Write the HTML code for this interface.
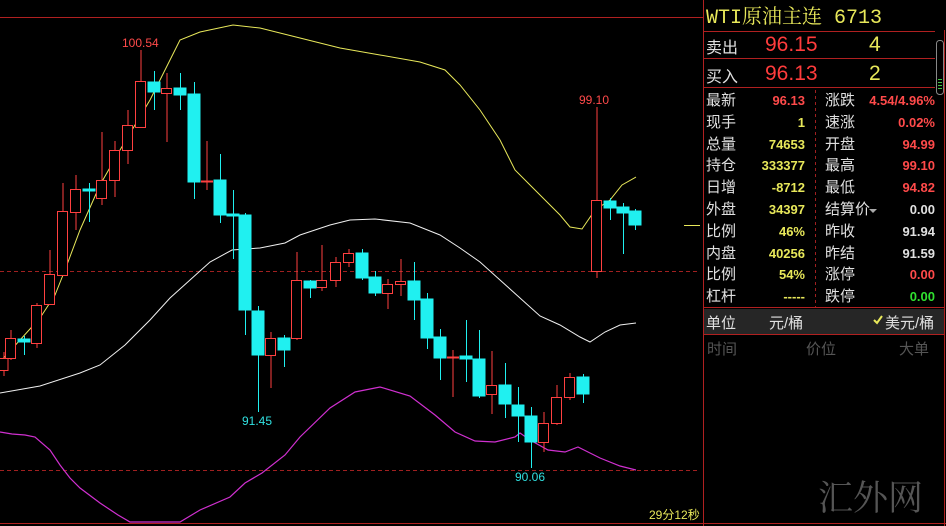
<!DOCTYPE html>
<html><head><meta charset="utf-8"><style>
html,body{margin:0;padding:0;background:#000;width:946px;height:526px;overflow:hidden;font-family:"Liberation Sans","Noto Sans CJK SC",sans-serif}
.p{position:absolute;white-space:nowrap}
.l{color:#e0e0e0;font-size:15px}
.v{font-size:13px;font-weight:bold;text-align:right}
</style></head><body>
<svg class="p" style="left:0;top:0" width="946" height="526">
<line x1="0" y1="17.5" x2="703" y2="17.5" stroke="#b02020"/>
<line x1="0" y1="523.5" x2="946" y2="523.5" stroke="#b02020"/>
<line x1="703.5" y1="0" x2="703.5" y2="526" stroke="#b02020"/>
<line x1="944.5" y1="30" x2="944.5" y2="526" stroke="#b02020"/>
<line x1="0" y1="271.5" x2="700" y2="271.5" stroke="#a02020" stroke-dasharray="4,3"/>
<line x1="0" y1="470.5" x2="700" y2="470.5" stroke="#a02020" stroke-dasharray="4,3"/>
<polyline fill="none" stroke="#e8e85a" stroke-width="1" points="0,362 20,340 40,318 55,295 65,270 80,230 100,185 120,150 150,100 165,70 180,40 200,32 233,25 260,28 300,38 340,48 380,55 420,62 445,70 460,85 480,110 500,140 515,170 530,185 545,200 560,215 570,227 582,229 595,210 610,200 622,185 636,177"/>
<line x1="684" y1="225.5" x2="700" y2="225.5" stroke="#e8e85a"/>
<polyline fill="none" stroke="#f0f0f0" stroke-width="1" points="0,393 40,386 80,373 100,365 125,345 150,320 170,298 190,280 210,262 232,250 260,248 285,243 300,235 330,225 350,220 375,219 410,223 440,235 460,248 480,262 500,280 520,298 540,316 560,325 580,337 590,342 605,332 620,325 636,323"/>
<polyline fill="none" stroke="#d030d0" stroke-width="1.2" points="0,432 12,434 25,435 35,437 50,450 60,465 70,478 80,488 100,503 118,515 130,522 180,522 200,510 230,497 245,483 262,473 285,455 300,437 330,408 355,392 380,387 410,396 435,415 455,432 475,441 495,442 515,437 520,433 530,440 548,450 565,452 578,447 600,458 620,466 636,470"/>
<g stroke="#ff4040" fill="none" stroke-width="1">
<path d="M4,352V376M11,330V360M37,303V348M50,250V305M63,183V276M76,175V230M102,132V205M115,141V197M128,110V164M141,50V127M167,73V142M207,141V190M271,332V388M297,252V340M322,245V291M336,257V287M349,249V267M388,279V309M401,259V296M453,350V397M492,351V414M544,412V452M557,385V425M570,373V400M597,107V278"/>
<rect x="-2" y="358.5" width="10" height="12" fill="#000"/>
<rect x="5.5" y="338.5" width="10" height="20" fill="#000"/>
<rect x="31.5" y="305.5" width="10" height="38" fill="#000"/>
<rect x="44.5" y="274.5" width="10" height="30" fill="#000"/>
<rect x="57.5" y="211.5" width="10" height="64" fill="#000"/>
<rect x="70.5" y="189.5" width="10" height="23" fill="#000"/>
<rect x="96.5" y="180.5" width="10" height="18" fill="#000"/>
<rect x="109.5" y="150.5" width="10" height="30" fill="#000"/>
<rect x="122.5" y="125.5" width="10" height="25" fill="#000"/>
<rect x="135.5" y="81.5" width="10" height="46" fill="#000"/>
<rect x="161.5" y="88.5" width="10" height="5" fill="#000"/>
<line x1="201" y1="181.5" x2="213" y2="181.5" stroke-width="2"/>
<rect x="265.5" y="338.5" width="10" height="17" fill="#000"/>
<rect x="291.5" y="280.5" width="10" height="58" fill="#000"/>
<rect x="316.5" y="280.5" width="10" height="7" fill="#000"/>
<rect x="330.5" y="262.5" width="10" height="18" fill="#000"/>
<rect x="343.5" y="253.5" width="10" height="9" fill="#000"/>
<rect x="382.5" y="284.5" width="10" height="9" fill="#000"/>
<rect x="395.5" y="281.5" width="10" height="3" fill="#000"/>
<line x1="447" y1="357.5" x2="459" y2="357.5" stroke-width="2"/>
<rect x="486.5" y="385.5" width="10" height="9" fill="#000"/>
<rect x="538.5" y="423.5" width="10" height="19" fill="#000"/>
<rect x="551.5" y="397.5" width="10" height="26" fill="#000"/>
<rect x="564.5" y="377.5" width="10" height="20" fill="#000"/>
<rect x="591.5" y="200.5" width="10" height="71" fill="#000"/>
</g>
<g stroke="#20f0f0" fill="#20f0f0" stroke-width="1">
<path d="M24.5,336V355M89.5,183V222M154.5,71V110M180.5,73V110M194.5,82V199M220.5,154V223M233.5,190V259M245.5,213V335M258.5,306V412M284.5,335V367M310.5,280V298M362.5,249V280M375.5,271V296M414.5,262V320M427.5,293V349M440.5,329V380M466.5,320V382M479.5,330V398M505.5,363V418M518.5,387V442M531.5,407V468M583.5,374V403M610.5,198V220M623.5,203V254M635.5,209V230"/>
<rect x="18" y="339" width="12" height="3"/>
<rect x="83" y="189" width="12" height="2"/>
<rect x="148" y="82" width="12" height="10"/>
<rect x="174" y="88" width="12" height="7"/>
<rect x="188" y="94" width="12" height="88"/>
<rect x="214" y="180" width="12" height="35"/>
<rect x="227" y="214" width="12" height="2"/>
<rect x="239" y="215" width="12" height="95"/>
<rect x="252" y="311" width="12" height="44"/>
<rect x="278" y="338" width="12" height="12"/>
<rect x="304" y="281" width="12" height="7"/>
<rect x="356" y="253" width="12" height="25"/>
<rect x="369" y="277" width="12" height="16"/>
<rect x="408" y="281" width="12" height="19"/>
<rect x="421" y="299" width="12" height="39"/>
<rect x="434" y="337" width="12" height="21"/>
<rect x="460" y="356" width="12" height="3"/>
<rect x="473" y="359" width="12" height="37"/>
<rect x="499" y="385" width="12" height="19"/>
<rect x="512" y="405" width="12" height="11"/>
<rect x="525" y="416" width="12" height="26"/>
<rect x="577" y="377" width="12" height="17"/>
<rect x="604" y="201" width="12" height="7"/>
<rect x="617" y="207" width="12" height="6"/>
<rect x="629" y="211" width="12" height="14"/>
</g>
<text x="122" y="47" fill="#ff4a4a" font-size="12" font-family="Liberation Sans">100.54</text>
<text x="579" y="104" fill="#ff4a4a" font-size="12" font-family="Liberation Sans">99.10</text>
<text x="242" y="425" fill="#30e0e0" font-size="12" font-family="Liberation Sans">91.45</text>
<text x="515" y="481" fill="#30e0e0" font-size="12" font-family="Liberation Sans">90.06</text>
<text x="649" y="519" fill="#e8e85a" font-size="12" font-family="Liberation Sans,Noto Sans CJK SC">29分12秒</text>
<text x="818" y="510" fill="#555" font-size="35" font-family="Noto Serif CJK SC,serif">汇外网</text>
<text x="706" y="23" fill="#e8e85a" font-size="20" font-family="Liberation Mono,Noto Serif CJK SC,monospace">WTI原油主连 6713</text>
<line x1="703" y1="31.5" x2="935" y2="31.5" stroke="#b02020"/>
<line x1="703" y1="58.5" x2="935" y2="58.5" stroke="#b02020"/>
<line x1="703" y1="87.5" x2="935" y2="87.5" stroke="#b02020"/>
<rect x="936.5" y="40.5" width="7" height="54" rx="3" fill="none" stroke="#888"/>
<g stroke="#40c040"><line x1="938" y1="79.5" x2="942" y2="79.5"/><line x1="938" y1="82.5" x2="942" y2="82.5"/><line x1="938" y1="85.5" x2="942" y2="85.5"/><line x1="938" y1="88.5" x2="942" y2="88.5"/></g>
<line x1="815.5" y1="90" x2="815.5" y2="307" stroke="#a02020" stroke-dasharray="3,3"/>
<line x1="703" y1="307.5" x2="944" y2="307.5" stroke="#b02020"/>
<rect x="704" y="309" width="240" height="25" fill="#262626"/>
<line x1="703" y1="334.5" x2="944" y2="334.5" stroke="#b02020"/>
<path d="M874,320l3,3l5,-7" stroke="#e8e85a" stroke-width="2" fill="none"/>
<path d="M869,209l8,0l-4,4z" fill="#aaa"/>
</svg>
<div class="p l" style="left:706px;top:34px;font-size:16px">卖出</div>
<div class="p" style="left:765px;top:33px;font-size:21px;color:#ff3c3c">96.15</div>
<div class="p" style="left:869px;top:33px;font-size:21px;color:#e8e85a">4</div>
<div class="p l" style="left:706px;top:63px;font-size:16px">买入</div>
<div class="p" style="left:765px;top:62px;font-size:21px;color:#ff3c3c">96.13</div>
<div class="p" style="left:869px;top:62px;font-size:21px;color:#e8e85a">2</div>

<div class="p l" style="left:706px;top:90px;line-height:21.8px">最新<br>现手<br>总量<br>持仓<br>日增<br>外盘<br>比例<br>内盘<br>比例<br>杠杆</div>
<div class="p v" style="right:141px;top:90px;line-height:21.8px;color:#e8e85a"><span style="color:#ff4a4a">96.13</span><br>1<br>74653<br>333377<br>-8712<br>34397<br>46%<br>40256<br>54%<br>-----</div>
<div class="p l" style="left:825px;top:90px;line-height:21.8px">涨跌<br>速涨<br>开盘<br>最高<br>最低<br>结算价<br>昨收<br>昨结<br>涨停<br>跌停</div>
<div class="p v" style="right:11px;top:90px;line-height:21.8px;color:#e0e0e0"><span style="color:#ff4a4a">4.54/4.96%</span><br><span style="color:#ff4a4a">0.02%</span><br><span style="color:#ff4a4a">94.99</span><br><span style="color:#ff4a4a">99.10</span><br><span style="color:#ff4a4a">94.82</span><br>0.00<br>91.94<br>91.59<br><span style="color:#ff4a4a">0.00</span><br><span style="color:#30e030">0.00</span></div>
<div class="p l" style="left:706px;top:312px">单位</div>
<div class="p l" style="left:769px;top:312px">元/桶</div>
<div class="p l" style="left:885px;top:312px">美元/桶</div>
<div class="p" style="left:707px;top:338px;font-size:15px;color:#555">时间</div>
<div class="p" style="left:806px;top:338px;font-size:15px;color:#555">价位</div>
<div class="p" style="left:899px;top:338px;font-size:15px;color:#555">大单</div>
</body></html>
